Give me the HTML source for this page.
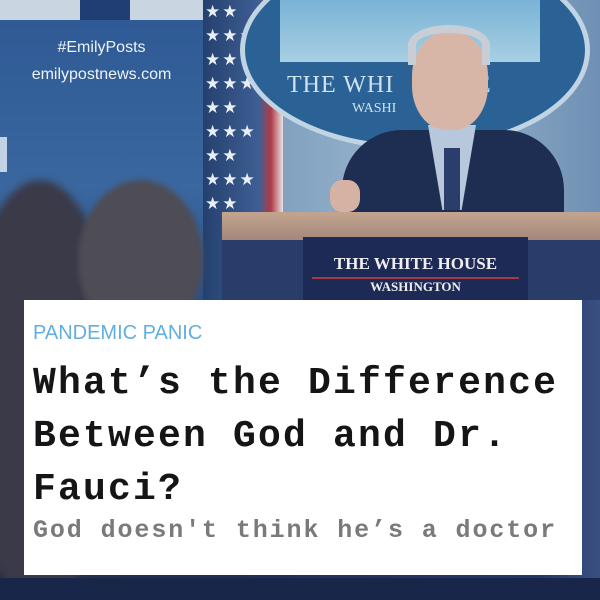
<!DOCTYPE html>
<html><head><style>
*{margin:0;padding:0;box-sizing:border-box}
body{width:600px;height:600px;overflow:hidden;position:relative;background:#1b2a4e;font-family:"Liberation Sans",sans-serif}
.a{position:absolute}
</style></head><body>
<div class="a" style="left:0;top:0;width:600px;height:300px;background:linear-gradient(90deg,#2c4f86,#7f9fbe 45%,#9cb8cf 70%,#6f90b4)"></div>
<div class="a" style="left:0;top:300px;width:600px;height:300px;background:linear-gradient(90deg,#2a2f45,#1f2f58 40%,#23386a 90%,#3a5080)"></div>
<div class="a" style="left:0;top:0;width:203px;height:20px;background:#c9d6e2"></div>
<div class="a" style="left:80px;top:0;width:50px;height:20px;background:#203e72"></div>
<div class="a" style="left:0;top:20px;width:203px;height:280px;background:linear-gradient(180deg,#2f5a95,#3a679f 60%,#2c4f86)"></div>
<div class="a" style="left:0;top:137px;width:7px;height:35px;background:#e6eef5;opacity:.8"></div>
<div class="a" style="left:0;top:34px;width:203px;text-align:center;color:#eef3f8;font-size:16px;line-height:27px">#EmilyPosts<br>emilypostnews.com</div>
<div class="a" style="left:203px;top:0;width:80px;height:300px;background:linear-gradient(90deg,#24406e,#3e5f94 70%,#b03b45 85%,#e9e3e6)"></div>
<div class="a" style="left:205px;top:0;width:60px;height:220px;color:#e9eef6;font-size:17px;line-height:24px;letter-spacing:2px;overflow:hidden">★★<br>★★★<br>★★<br>★★★<br>★★<br>★★★<br>★★<br>★★★<br>★★</div>
<div class="a" style="left:240px;top:-50px;width:350px;height:200px;border-radius:50%;background:#2b6296;border:5px solid #c0d4e4"></div>
<div class="a" style="left:280px;top:0;width:260px;height:62px;background:linear-gradient(180deg,#7ab3d5,#a7cfe3)"></div>
<div class="a" style="left:287px;top:72px;width:260px;color:#cfe2ee;font-family:'Liberation Serif',serif;font-size:24px;letter-spacing:1px">THE WHI&nbsp;&nbsp;&nbsp;&nbsp;&nbsp;&nbsp;&nbsp;USE</div>
<div class="a" style="left:352px;top:101px;color:#cfe2ee;font-family:'Liberation Serif',serif;font-size:14px">WASHI</div>
<div class="a" style="left:342px;top:130px;width:222px;height:100px;border-radius:60px 60px 0 0;background:#1e2d52"></div>
<div class="a" style="left:428px;top:125px;width:48px;height:85px;background:#b8c8dc;clip-path:polygon(0 0,100% 0,70% 100%,30% 100%)"></div>
<div class="a" style="left:444px;top:148px;width:16px;height:62px;background:#2b3d6a"></div>
<div class="a" style="left:412px;top:32px;width:76px;height:98px;border-radius:45%;background:#d7b6a8"></div>
<div class="a" style="left:408px;top:25px;width:82px;height:40px;border-radius:50% 50% 0 0;border:8px solid #c9ced6;border-bottom:none"></div>
<div class="a" style="left:330px;top:180px;width:30px;height:32px;border-radius:40%;background:#d6b2a4"></div>
<div class="a" style="left:222px;top:212px;width:378px;height:28px;background:linear-gradient(180deg,#c3a58f,#a4877a)"></div>
<div class="a" style="left:222px;top:240px;width:378px;height:60px;background:#2a3d6a"></div>
<div class="a" style="left:303px;top:237px;width:225px;height:63px;background:#1c2a55"></div>
<div class="a" style="left:303px;top:254px;width:225px;text-align:center;color:#f1eef0;font-family:'Liberation Serif',serif;font-size:17px;font-weight:bold">THE WHITE HOUSE</div>
<div class="a" style="left:312px;top:277px;width:207px;height:2px;background:#a23a48"></div>
<div class="a" style="left:303px;top:279px;width:225px;text-align:center;color:#f1eef0;font-family:'Liberation Serif',serif;font-size:13px;font-weight:bold">WASHINGTON</div>
<div class="a" style="left:-40px;top:180px;width:160px;height:420px;border-radius:50%;background:#3a3a48;filter:blur(4px)"></div>
<div class="a" style="left:78px;top:180px;width:125px;height:160px;border-radius:50%;background:#4e4c55;filter:blur(3px)"></div>
<div class="a" style="left:0;top:578px;width:600px;height:22px;background:#18264a"></div>
<div class="a" style="left:24px;top:300px;width:558px;height:275px;background:#fff"></div>
<div class="a" style="left:33px;top:322px;color:#63aee0;font-size:20px">PANDEMIC PANIC</div>
<div class="a" style="left:33px;top:357px;color:#151515;font-family:'Liberation Mono',monospace;font-weight:bold;font-size:38px;letter-spacing:2.2px;line-height:53px;white-space:nowrap">What’s the Difference<br>Between God and Dr.<br>Fauci?</div>
<div class="a" style="left:33px;top:516px;color:#7a7a7a;font-family:'Liberation Mono',monospace;font-weight:bold;font-size:25px;letter-spacing:1.9px;white-space:nowrap">God doesn't think he’s a doctor</div>
</body></html>
